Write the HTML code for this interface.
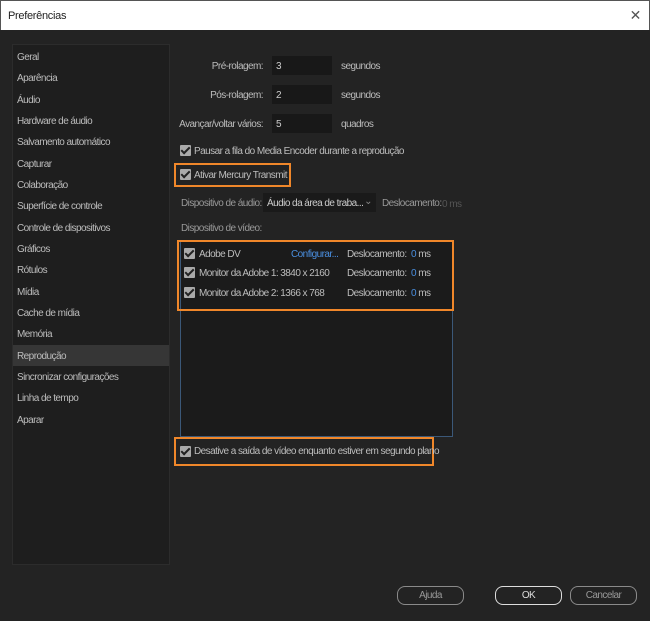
<!DOCTYPE html>
<html><head><style>
*{margin:0;padding:0;box-sizing:border-box}
body{width:650px;height:621px;background:#232323;font-family:"Liberation Sans",sans-serif;font-size:10px;color:#bdbdbd;position:relative;overflow:hidden;letter-spacing:-0.55px}
.a{position:absolute;white-space:nowrap}
.title{position:absolute;left:0;top:0;width:650px;height:30px;background:#fff;color:#222;font-size:11px;padding:9px 7px;border:1px solid #555;border-bottom:none;letter-spacing:-0.3px}
.side{position:absolute;left:12px;top:44px;width:158px;height:521px;background:#1e1e1e;border:1px solid #2c2c2c}
.side div{position:absolute;left:4px;height:21px;line-height:23px}
.sel{background:#363636;left:0!important;width:156px;padding-left:4px}
.inp{position:absolute;background:#181818;height:19px;width:60px;color:#ccc;padding:5px 4px 0}
.cb{position:absolute;width:11px;height:11px;background:#aaa;border-radius:1px}
.cb:after{content:"";position:absolute;left:3px;top:0px;width:3px;height:7px;border:solid #222;border-width:0 2px 2px 0;transform:rotate(45deg)}
.or{position:absolute;border:2px solid #f0872a}
.btn{position:absolute;height:19px;border:1.5px solid #8a8a8a;border-radius:8px;text-align:center;line-height:18px;color:#999}
.blue{color:#4a8fe0}
.t{margin-top:2px}
</style></head><body>
<div class="title">Preferências<span style="position:absolute;right:8px;top:6px;font-size:14px;color:#555">✕</span></div>
<div class="side">
<div style="top:1px">Geral</div><div style="top:22px">Aparência</div><div style="top:44px">Áudio</div><div style="top:65px">Hardware de áudio</div><div style="top:86px">Salvamento automático</div><div style="top:108px">Capturar</div><div style="top:129px">Colaboração</div><div style="top:150px">Superfície de controle</div><div style="top:172px">Controle de dispositivos</div><div style="top:193px">Gráficos</div><div style="top:214px">Rótulos</div><div style="top:236px">Mídia</div><div style="top:257px">Cache de mídia</div><div style="top:278px">Memória</div><div class="sel" style="top:300px">Reprodução</div><div style="top:321px">Sincronizar configurações</div><div style="top:342px">Linha de tempo</div><div style="top:364px">Aparar</div>
</div>
<div class="a" style="right:387px;top:61px">Pré-rolagem:</div><div class="inp" style="left:272px;top:56px">3</div><div class="a" style="left:341px;top:61px">segundos</div>
<div class="a" style="right:387px;top:90px">Pós-rolagem:</div><div class="inp" style="left:272px;top:85px">2</div><div class="a" style="left:341px;top:90px">segundos</div>
<div class="a" style="right:387px;top:119px">Avançar/voltar vários:</div><div class="inp" style="left:272px;top:114px">5</div><div class="a" style="left:341px;top:119px">quadros</div>
<div class="cb" style="left:180px;top:145px"></div><div class="a" style="left:194px;top:146px">Pausar a fila do Media Encoder durante a reprodução</div>
<div class="or" style="left:174px;top:163px;width:117px;height:24px"></div>
<div class="cb" style="left:180px;top:169px"></div><div class="a" style="left:194px;top:170px">Ativar Mercury Transmit</div>
<div class="a" style="left:181px;top:198px;color:#999">Dispositivo de áudio:</div>
<div class="inp" style="left:263px;top:193px;width:113px;background:#1a1a1a;color:#ccc">Áudio da área de traba...<span style="position:absolute;right:4px;top:3px;color:#888">⌄</span></div>
<div class="a" style="left:382px;top:198px;color:#999">Deslocamento:</div><div class="a" style="left:442px;top:199px;color:#555">0 ms</div>
<div class="a" style="left:181px;top:223px;color:#999">Dispositivo de vídeo:</div>
<div style="position:absolute;left:180px;top:240px;width:273px;height:197px;background:#1b1b1b;border:1px solid #3b5878"></div>
<div class="or" style="left:177px;top:240px;width:277px;height:71px"></div>
<div class="cb" style="left:184px;top:248px"></div><div class="a" style="left:199px;top:249px">Adobe DV</div><div class="a blue" style="left:291px;top:249px">Configurar...</div><div class="a" style="left:347px;top:249px">Deslocamento:</div><div class="a" style="left:411px;top:249px"><span class="blue">0</span> ms</div>
<div class="cb" style="left:184px;top:267px"></div><div class="a" style="left:199px;top:268px">Monitor da Adobe 1: 3840 x 2160</div><div class="a" style="left:347px;top:268px">Deslocamento:</div><div class="a" style="left:411px;top:268px"><span class="blue">0</span> ms</div>
<div class="cb" style="left:184px;top:287px"></div><div class="a" style="left:199px;top:288px">Monitor da Adobe 2: 1366 x 768</div><div class="a" style="left:347px;top:288px">Deslocamento:</div><div class="a" style="left:411px;top:288px"><span class="blue">0</span> ms</div>
<div class="or" style="left:174px;top:437px;width:260px;height:29px"></div>
<div class="cb" style="left:180px;top:446px"></div><div class="a" style="left:194px;top:446px">Desative a saída de vídeo enquanto estiver em segundo plano</div>
<div class="btn" style="left:397px;top:586px;width:67px">Ajuda</div>
<div class="btn" style="left:495px;top:586px;width:67px;border-color:#ddd;color:#ddd">OK</div>
<div class="btn" style="left:570px;top:586px;width:67px">Cancelar</div>
</body></html>
